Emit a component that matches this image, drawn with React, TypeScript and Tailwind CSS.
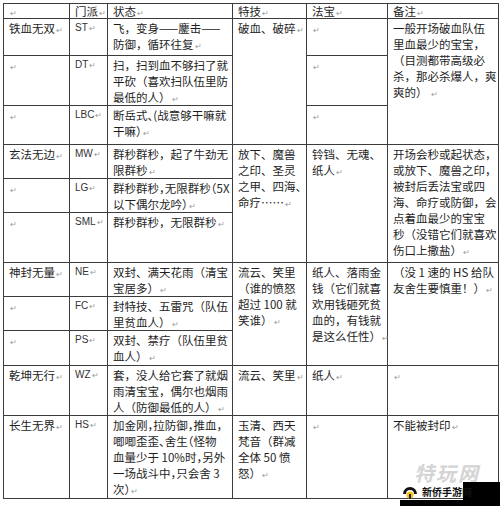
import React from "react";

type Line = string;

function Mark() {
  return (
    <span className="ml-[1px] align-baseline text-[8px] leading-[0] text-[#9a9a9a]">
      ↵
    </span>
  );
}

function Lines({ lines, latin }: { lines: Line[]; latin?: boolean }) {
  return (
    <>
      {lines.map((l, i) => (
        <div
          key={i}
          className={
            latin
              ? "whitespace-nowrap font-['Liberation_Sans',sans-serif] text-[10px] text-[#333]"
              : "whitespace-nowrap"
          }
        >
          {l}
          {i === lines.length - 1 && <Mark />}
        </div>
      ))}
    </>
  );
}

function Td({
  lines = [""],
  rowSpan,
  latin,
  tight,
}: {
  lines?: Line[];
  rowSpan?: number;
  latin?: boolean;
  tight?: boolean;
}) {
  return (
    <td
      rowSpan={rowSpan}
      className={
        "border border-[#3c3c3c] px-[5px] pt-[1px] pb-0 align-top " +
        (tight ? "[font-feature-settings:'halt']" : "")
      }
    >
      <Lines lines={lines} latin={latin} />
    </td>
  );
}

export default function App() {
  return (
    <div className="relative h-[506px] w-[500px] overflow-hidden bg-white font-['Noto_Sans_CJK_SC',sans-serif] text-[11.5px] leading-[16px] text-[#1e1e1e]">
      <table className="ml-[3px] mt-[3px] w-[495px] table-fixed border-collapse">
        <colgroup>
          <col className="w-[66px]" />
          <col className="w-[38px]" />
          <col className="w-[125px]" />
          <col className="w-[74px]" />
          <col className="w-[81px]" />
          <col className="w-[111px]" />
        </colgroup>
        <tbody>
          <tr className="h-[13px] leading-[13px]">
            <Td />
            <Td lines={["门派"]} />
            <Td lines={["状态"]} />
            <Td lines={["特技"]} />
            <Td lines={["法宝"]} />
            <Td lines={["备注"]} />
          </tr>

          {/* 铁血无双 */}
          <tr className="h-[37px]">
            <Td lines={["铁血无双"]} />
            <Td lines={["ST"]} latin />
            <Td lines={["飞，变身——鏖击——", "防御，循环往复"]} />
            <Td rowSpan={3} lines={["破血、破碎"]} />
            <Td />
            <Td
              rowSpan={3}
              lines={[
                "一般开场破血队伍",
                "里血最少的宝宝，",
                "（目测都带高级必",
                "杀，那必杀爆人，爽",
                "爽的） ",
              ]}
            />
          </tr>
          <tr className="h-[50px]">
            <Td />
            <Td lines={["DT"]} latin />
            <Td
              lines={[
                "扫，扫到血不够扫了就",
                "平砍（喜欢扫队伍里防",
                "最低的人）",
              ]}
            />
            <Td />
          </tr>
          <tr className="h-[39px]">
            <Td />
            <Td lines={["LBC"]} latin />
            <Td lines={["断岳式、(战意够干嘛就", "干嘛）"]} tight />
            <Td />
          </tr>

          {/* 玄法无边 */}
          <tr className="h-[32px]">
            <Td lines={["玄法无边"]} />
            <Td lines={["MW"]} latin />
            <Td lines={["群秒群秒，起了牛劲无", "限群秒"]} />
            <Td
              rowSpan={3}
              lines={["放下、魔兽", "之印、圣灵", "之甲、四海、", "命疗……"]}
            />
            <Td rowSpan={3} lines={["铃铛、无魂、", "纸人"]} />
            <Td
              rowSpan={3}
              lines={[
                "开场会秒或起状态，",
                "或放下、魔兽之印，",
                "被封后丢法宝或四",
                "海、命疗或防御，会",
                "点着血最少的宝宝",
                "秒（没错它们就喜欢",
                "伤口上撒盐）",
              ]}
            />
          </tr>
          <tr className="h-[33px]">
            <Td />
            <Td lines={["LG"]} latin />
            <Td lines={["群秒群秒，无限群秒（5X", "以下偶尔龙吟）"]} tight />
          </tr>
          <tr className="h-[50px]">
            <Td />
            <Td lines={["SML"]} latin />
            <Td lines={["群秒群秒，无限群秒"]} />
          </tr>

          {/* 神封无量 */}
          <tr className="h-[32px]">
            <Td lines={["神封无量"]} />
            <Td lines={["NE"]} latin />
            <Td lines={["双封、满天花雨（清宝", "宝居多）"]} />
            <Td
              rowSpan={3}
              lines={["流云、笑里", "（谁的愤怒", "超过 100 就", "笑谁）"]}
            />
            <Td
              rowSpan={3}
              lines={[
                "纸人、落雨金",
                "钱（它们就喜",
                "欢用钱砸死贫",
                "血的，有钱就",
                "是这么任性）",
              ]}
            />
            <Td
              rowSpan={3}
              lines={["（没 1 速的 HS 给队", "友舍生要慎重！）"]}
            />
          </tr>
          <tr className="h-[33px]">
            <Td />
            <Td lines={["FC"]} latin />
            <Td lines={["封特技、五雷咒（队伍", "里贫血人）"]} />
          </tr>
          <tr className="h-[35px]">
            <Td />
            <Td lines={["PS"]} latin />
            <Td lines={["双封、禁疗（队伍里贫", "血人）"]} />
          </tr>

          {/* 乾坤无行 */}
          <tr className="h-[50px]">
            <Td lines={["乾坤无行"]} />
            <Td lines={["WZ"]} latin />
            <Td
              lines={[
                "套，没人给它套了就烟",
                "雨清宝宝，偶尔也烟雨",
                "人（防御最低的人）",
              ]}
            />
            <Td lines={["流云、笑里"]} />
            <Td lines={["纸人"]} />
            <Td />
          </tr>

          {/* 长生无界 */}
          <tr className="h-[83px]">
            <Td lines={["长生无界"]} />
            <Td lines={["HS"]} latin />
            <Td
              lines={[
                "加金刚，拉防御，推血，",
                "唧唧歪歪、舍生（怪物",
                "血量少于 10%时，另外",
                "一场战斗中，只会舍 3",
                "次）",
              ]}
              tight
            />
            <Td lines={["玉清、西天", "梵音（群减", "全体 50 愤", "怒）"]} />
            <Td />
            <Td lines={["不能被封印"]} />
          </tr>
        </tbody>
      </table>

      {/* watermark */}
      <div className="absolute left-[414px] top-[462px] text-[20px] font-bold italic leading-[21px] tracking-[2px] text-[#d4d4d4]">
        特玩网
      </div>
      <div className="absolute left-[463px] top-[482px] h-[18px] w-[37px] bg-black" />
      <div className="absolute left-[400px] top-[500px] h-[6px] w-[100px] bg-black" />
      <div className="absolute left-[402px] top-[485px] flex items-center gap-[4px]">
        <svg width="16" height="15" viewBox="0 0 16 15">
          <path d="M1 9 A7 7 0 0 1 15 9 L12 9 A4 4 0 0 0 4 9 Z" fill="#111" />
          <circle cx="8" cy="10" r="3.6" fill="#f3c21b" />
          <rect x="7" y="9" width="2" height="5" fill="#222" />
        </svg>
        <span className="font-['Liberation_Serif','Noto_Sans_CJK_SC',serif] text-[10px] font-bold leading-[12px] text-[#111]">
          新侨手游网
        </span>
      </div>
    </div>
  );
}
